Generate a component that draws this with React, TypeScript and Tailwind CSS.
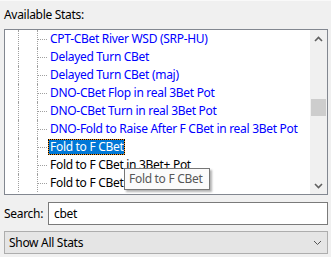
const rows = [
  { name: "CPT-CBet River WSD (SRP-HU)", calc: true },
  { name: "Delayed Turn CBet", calc: true },
  { name: "Delayed Turn CBet (maj)", calc: true },
  { name: "DNO-CBet Flop in real 3Bet Pot", calc: true },
  { name: "DNO-CBet Turn in real 3Bet Pot", calc: true },
  { name: "DNO-Fold to Raise After F CBet in real 3Bet Pot", calc: true },
  { name: "Fold to F CBet", calc: false, selected: true },
  { name: "Fold to F CBet in 3Bet+ Pot", calc: false },
  { name: "Fold to F CBet in real 3Bet Pot", calc: false },
];

const Chevron = ({ up, color = "#606060", thin }: { up?: boolean; color?: string; thin?: boolean }) => (
  <svg width="9" height="6" viewBox="0 0 9 6">
    <polyline
      points={up ? "1,5 4.5,1.5 8,5" : "1,1 4.5,4.5 8,1"}
      fill="none"
      stroke={color}
      strokeWidth={thin ? "1" : "1.6"}
    />
  </svg>
);

const App = () => {
  return (
    <div className="w-[331px] h-[257px] bg-[#f0f0f0] border-t border-[#f9f9f9] font-['Segoe_UI','Noto_Sans',sans-serif] text-[12px] tracking-[-0.3px] text-black overflow-hidden">
      <p className="pl-[4px] pt-[6px] h-[28px] leading-[16px]">Available Stats:</p>

      <div className="relative ml-[4px] w-[324px] h-[166px] border border-[#828790] bg-white flex">
        <div className="flex-1 min-w-0 overflow-hidden">
          {rows.map((item, idx) => (
            <div key={idx} className="flex h-[18px]">
              <span className="shrink-0 ml-[13px] w-[19px] border-l border-dotted border-[#a0a0a0]" />
              <span className="shrink-0 w-[11px] border-l border-dotted border-[#a0a0a0] flex items-center">
                <span className="w-[9px] border-t border-dotted border-[#a0a0a0]" />
              </span>
              <div className="shrink-0 flex items-center">
                {item.selected ? (
                  <span className="bg-[#f7941d] h-[16px] flex">
                    <span className="border border-dotted border-black bg-[#0078d7] bg-clip-padding text-white px-[1px] leading-[14px] whitespace-nowrap">
                      {item.name}
                    </span>
                  </span>
                ) : (
                  <span
                    className={
                      "px-[2px] leading-[16px] whitespace-nowrap " +
                      (item.calc ? "text-[#0000ff]" : "text-black")
                    }
                  >
                    {item.name}
                  </span>
                )}
              </div>
            </div>
          ))}
        </div>

        <div className="shrink-0 w-[17px] bg-[#f0f0f0] flex flex-col">
          <div className="h-[17px] flex items-center justify-center">
            <Chevron up />
          </div>
          <div className="flex-1">
            <div className="mt-[52px] ml-[1px] w-[15px] h-[17px] bg-[#cdcdcd]" />
          </div>
          <div className="h-[17px] flex items-center justify-center">
            <Chevron />
          </div>
        </div>

        <div className="absolute left-[119px] top-[138px] w-[86px] h-[22px] border border-[#767676] bg-[#fbfbfb] text-[#575757] pl-[4px] leading-[20px] shadow-[2px_2px_2px_rgba(0,0,0,0.3)] whitespace-nowrap">
          Fold to F CBet
        </div>
      </div>

      <div className="flex items-center justify-between mt-[7px] pl-[4px] w-[328px]">
        <span>Search:</span>
        <div className="w-[280px] h-[23px] border border-[#7a7a7a] bg-white pl-[5px] leading-[21px]">cbet</div>
      </div>

      <div className="mt-[6px] ml-[4px] w-[324px] h-[23px] border border-[#adadad] bg-[#e5e5e5] flex items-center justify-between pl-[4px] pr-[5px]">
        <span>Show All Stats</span>
        <Chevron color="#555555" thin />
      </div>
    </div>
  );
};

export default App;
